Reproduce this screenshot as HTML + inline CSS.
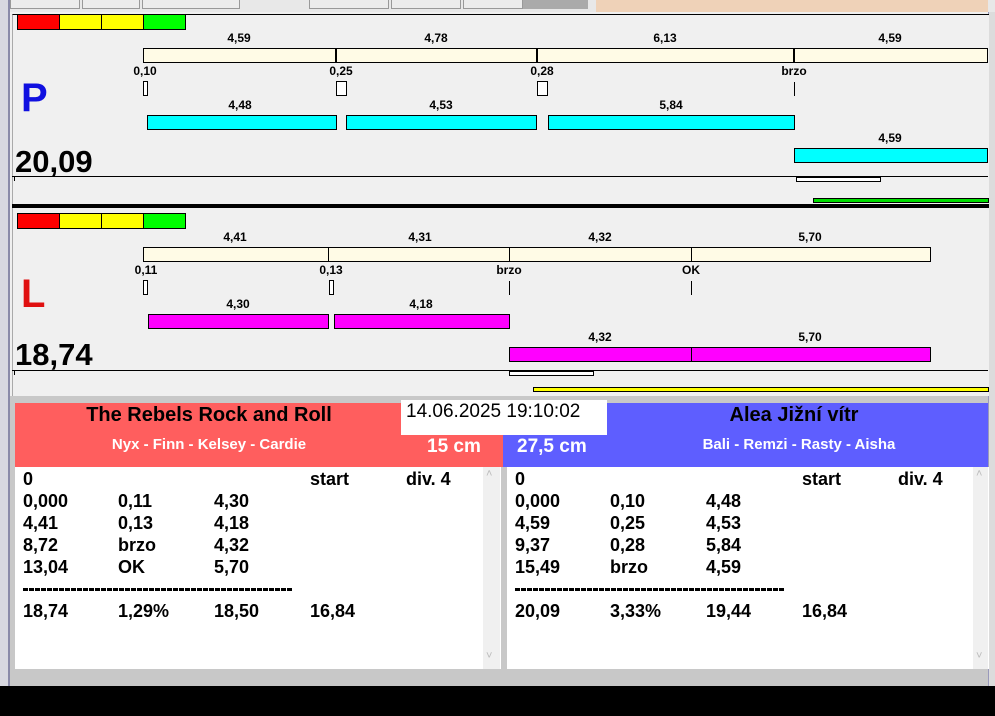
<!DOCTYPE html>
<html><head><meta charset="utf-8"><style>
*{margin:0;padding:0;box-sizing:border-box}
body{width:995px;height:716px;position:relative;overflow:hidden;background:#f0f0f0;font-family:"Liberation Sans",Arial,sans-serif}
.a{position:absolute}
.t{position:absolute;font-weight:bold;font-size:12px;color:#000;transform:translateX(-50%);white-space:nowrap}
.bx{position:absolute;border:1px solid #000}
.r{position:absolute;font-weight:bold;font-size:18px;white-space:nowrap}
.d{position:absolute;font-weight:bold;font-size:14px;white-space:nowrap;letter-spacing:-0.2px}
</style></head><body>
<div class="a" style="left:0;top:0;width:995px;height:12px;background:#e8e8e8"></div>
<div class="a" style="left:10px;top:0;width:70px;height:9px;border:1px solid #999;border-top:0;background:#ececec"></div>
<div class="a" style="left:82px;top:0;width:58px;height:9px;border:1px solid #999;border-top:0;background:#ececec"></div>
<div class="a" style="left:142px;top:0;width:98px;height:9px;border:1px solid #999;border-top:0;background:#ececec"></div>
<div class="a" style="left:309px;top:0;width:80px;height:9px;border:1px solid #999;border-top:0;background:#ececec"></div>
<div class="a" style="left:391px;top:0;width:70px;height:9px;border:1px solid #999;border-top:0;background:#ececec"></div>
<div class="a" style="left:463px;top:0;width:60px;height:9px;border:1px solid #999;border-top:0;background:#ececec"></div>
<div class="a" style="left:523px;top:0;width:65px;height:9px;background:#aaa"></div>
<div class="a" style="left:596px;top:0;width:392px;height:12px;background:#efd2b8"></div>
<div class="a" style="left:0;top:0;width:8px;height:690px;background:#d8d8e0"></div>
<div class="a" style="left:8px;top:0;width:2px;height:690px;background:#8a8aa8"></div>
<div class="a" style="left:988px;top:12px;width:7px;height:680px;background:#dcdcdc;border-left:1px solid #99b"></div>
<div class="a" style="left:12px;top:14px;width:977px;height:382px;border-top:1px solid #000;border-left:1px solid #aaa;background:#f0f0f0"></div>

<div class="bx" style="left:17px;top:14px;width:43px;height:16px;background:#f00"></div>
<div class="bx" style="left:59px;top:14px;width:43px;height:16px;background:#ff0"></div>
<div class="bx" style="left:101px;top:14px;width:43px;height:16px;background:#ff0"></div>
<div class="bx" style="left:143px;top:14px;width:43px;height:16px;background:#0f0"></div>

<div class="bx" style="left:143px;top:48px;width:845px;height:15px;background:#fffbe6"></div>
<div class="a" style="left:335px;top:48px;width:2px;height:15px;background:#000"></div>
<div class="a" style="left:536px;top:48px;width:2px;height:15px;background:#000"></div>
<div class="a" style="left:793px;top:48px;width:2px;height:15px;background:#000"></div>
<div class="t" style="left:239px;top:31px">4,59</div>
<div class="t" style="left:436px;top:31px">4,78</div>
<div class="t" style="left:665px;top:31px">6,13</div>
<div class="t" style="left:890px;top:31px">4,59</div>
<div class="t" style="left:145px;top:64px">0,10</div>
<div class="t" style="left:341px;top:64px">0,25</div>
<div class="t" style="left:542px;top:64px">0,28</div>
<div class="t" style="left:794px;top:64px">brzo</div>
<div class="bx" style="left:143px;top:81px;width:5px;height:15px;background:#fff"></div>
<div class="bx" style="left:336px;top:81px;width:11px;height:15px;background:#fff"></div>
<div class="bx" style="left:537px;top:81px;width:11px;height:15px;background:#fff"></div>
<div class="a" style="left:794px;top:82px;width:1px;height:14px;background:#000"></div>
<div class="t" style="left:240px;top:98px">4,48</div>
<div class="t" style="left:441px;top:98px">4,53</div>
<div class="t" style="left:671px;top:98px">5,84</div>
<div class="bx" style="left:147px;top:115px;width:190px;height:15px;background:#0ff"></div>
<div class="bx" style="left:346px;top:115px;width:191px;height:15px;background:#0ff"></div>
<div class="bx" style="left:548px;top:115px;width:247px;height:15px;background:#0ff"></div>
<div class="t" style="left:890px;top:131px">4,59</div>
<div class="bx" style="left:794px;top:148px;width:194px;height:15px;background:#0ff"></div>
<div class="a" style="left:21px;top:76px;font-size:40px;font-weight:bold;color:#1010e0">P</div>
<div class="a" style="left:15px;top:144px;font-size:31px;font-weight:bold">20,09</div>
<div class="a" style="left:12px;top:176px;width:976px;height:1px;background:#000"></div>
<div class="a" style="left:14px;top:176px;width:1px;height:5px;background:#000"></div>
<div class="bx" style="left:796px;top:177px;width:85px;height:5px;background:#fff"></div>
<div class="bx" style="left:813px;top:198px;width:176px;height:5px;background:#0d0"></div>
<div class="a" style="left:12px;top:204px;width:977px;height:4px;background:#000"></div>

<div class="bx" style="left:17px;top:213px;width:43px;height:16px;background:#f00"></div>
<div class="bx" style="left:59px;top:213px;width:43px;height:16px;background:#ff0"></div>
<div class="bx" style="left:101px;top:213px;width:43px;height:16px;background:#ff0"></div>
<div class="bx" style="left:143px;top:213px;width:43px;height:16px;background:#0f0"></div>
<div class="bx" style="left:143px;top:247px;width:788px;height:15px;background:#fffbe6"></div>
<div class="a" style="left:328px;top:247px;width:1px;height:15px;background:#000"></div>
<div class="a" style="left:509px;top:247px;width:1px;height:15px;background:#000"></div>
<div class="a" style="left:691px;top:247px;width:1px;height:15px;background:#000"></div>
<div class="t" style="left:235px;top:230px">4,41</div>
<div class="t" style="left:420px;top:230px">4,31</div>
<div class="t" style="left:600px;top:230px">4,32</div>
<div class="t" style="left:810px;top:230px">5,70</div>
<div class="t" style="left:146px;top:263px">0,11</div>
<div class="t" style="left:331px;top:263px">0,13</div>
<div class="t" style="left:509px;top:263px">brzo</div>
<div class="t" style="left:691px;top:263px">OK</div>
<div class="bx" style="left:143px;top:280px;width:5px;height:15px;background:#fff"></div>
<div class="bx" style="left:329px;top:280px;width:5px;height:15px;background:#fff"></div>
<div class="a" style="left:509px;top:281px;width:1px;height:14px;background:#000"></div>
<div class="a" style="left:691px;top:281px;width:1px;height:14px;background:#000"></div>
<div class="t" style="left:238px;top:297px">4,30</div>
<div class="t" style="left:421px;top:297px">4,18</div>
<div class="bx" style="left:148px;top:314px;width:181px;height:15px;background:#f0f"></div>
<div class="bx" style="left:334px;top:314px;width:176px;height:15px;background:#f0f"></div>
<div class="t" style="left:600px;top:330px">4,32</div>
<div class="t" style="left:810px;top:330px">5,70</div>
<div class="bx" style="left:509px;top:347px;width:422px;height:15px;background:#f0f"></div>
<div class="a" style="left:691px;top:347px;width:1px;height:15px;background:#000"></div>
<div class="a" style="left:21px;top:272px;font-size:40px;font-weight:bold;color:#e01010">L</div>
<div class="a" style="left:15px;top:337px;font-size:31px;font-weight:bold">18,74</div>
<div class="a" style="left:12px;top:370px;width:976px;height:1px;background:#000"></div>
<div class="a" style="left:14px;top:370px;width:1px;height:5px;background:#000"></div>
<div class="bx" style="left:509px;top:371px;width:85px;height:5px;background:#fff"></div>
<div class="bx" style="left:533px;top:387px;width:456px;height:5px;background:#ff0"></div>

<div class="a" style="left:10px;top:396px;width:978px;height:290px;background:#c8c8c8"></div>
<div class="a" style="left:15px;top:403px;width:488px;height:64px;background:#ff5e5e"></div>
<div class="a" style="left:503px;top:403px;width:485px;height:64px;background:#5e5eff"></div>
<div class="a" style="left:15px;top:404px;width:388px;text-align:center;font-weight:bold;font-size:20px">The Rebels Rock and Roll</div>
<div class="a" style="left:15px;top:436px;width:388px;text-align:center;font-weight:bold;font-size:15px;color:#fff">Nyx - Finn - Kelsey - Cardie</div>
<div class="a" style="left:401px;top:400px;width:206px;height:35px;background:#fff;font-size:19px;padding:1px 0 0 5px">14.06.2025 19:10:02</div>
<div class="a" style="left:427px;top:436px;font-weight:bold;font-size:19px;color:#fff">15 cm</div>
<div class="a" style="left:517px;top:436px;font-weight:bold;font-size:19px;color:#fff">27,5 cm</div>
<div class="a" style="left:606px;top:404px;width:376px;text-align:center;font-weight:bold;font-size:20px">Alea Jižní vítr</div>
<div class="a" style="left:606px;top:436px;width:386px;text-align:center;font-weight:bold;font-size:15px;color:#fff">Bali - Remzi - Rasty - Aisha</div>

<div class="a" style="left:15px;top:467px;width:486px;height:202px;background:#fff"></div>
<div class="a" style="left:483px;top:467px;width:17px;height:202px;background:#f0f0f0"></div>
<div class="a" style="left:507px;top:467px;width:482px;height:202px;background:#fff"></div>
<div class="a" style="left:973px;top:467px;width:15px;height:202px;background:#f0f0f0"></div>
<div class="a" style="left:486px;top:468px;font-size:11px;color:#bbb">˄</div>
<div class="a" style="left:486px;top:650px;font-size:11px;color:#bbb">˅</div>
<div class="a" style="left:976px;top:468px;font-size:11px;color:#bbb">˄</div>
<div class="a" style="left:976px;top:650px;font-size:11px;color:#bbb">˅</div>

<div class="r" style="left:23px;top:469px">0</div><div class="r" style="left:310px;top:469px">start</div><div class="r" style="left:406px;top:469px">div. 4</div>
<div class="r" style="left:23px;top:491px">0,000</div><div class="r" style="left:118px;top:491px">0,11</div><div class="r" style="left:214px;top:491px">4,30</div>
<div class="r" style="left:23px;top:513px">4,41</div><div class="r" style="left:118px;top:513px">0,13</div><div class="r" style="left:214px;top:513px">4,18</div>
<div class="r" style="left:23px;top:535px">8,72</div><div class="r" style="left:118px;top:535px">brzo</div><div class="r" style="left:214px;top:535px">4,32</div>
<div class="r" style="left:23px;top:557px">13,04</div><div class="r" style="left:118px;top:557px">OK</div><div class="r" style="left:214px;top:557px">5,70</div>
<div class="a" style="left:23px;top:588px;width:269px;height:3px;background:repeating-linear-gradient(90deg,#000 0 5px,transparent 5px 6px)"></div>
<div class="r" style="left:23px;top:601px">18,74</div><div class="r" style="left:118px;top:601px">1,29%</div><div class="r" style="left:214px;top:601px">18,50</div><div class="r" style="left:310px;top:601px">16,84</div>

<div class="r" style="left:515px;top:469px">0</div><div class="r" style="left:802px;top:469px">start</div><div class="r" style="left:898px;top:469px">div. 4</div>
<div class="r" style="left:515px;top:491px">0,000</div><div class="r" style="left:610px;top:491px">0,10</div><div class="r" style="left:706px;top:491px">4,48</div>
<div class="r" style="left:515px;top:513px">4,59</div><div class="r" style="left:610px;top:513px">0,25</div><div class="r" style="left:706px;top:513px">4,53</div>
<div class="r" style="left:515px;top:535px">9,37</div><div class="r" style="left:610px;top:535px">0,28</div><div class="r" style="left:706px;top:535px">5,84</div>
<div class="r" style="left:515px;top:557px">15,49</div><div class="r" style="left:610px;top:557px">brzo</div><div class="r" style="left:706px;top:557px">4,59</div>
<div class="a" style="left:515px;top:588px;width:269px;height:3px;background:repeating-linear-gradient(90deg,#000 0 5px,transparent 5px 6px)"></div>
<div class="r" style="left:515px;top:601px">20,09</div><div class="r" style="left:610px;top:601px">3,33%</div><div class="r" style="left:706px;top:601px">19,44</div><div class="r" style="left:802px;top:601px">16,84</div>

<div class="a" style="left:0;top:686px;width:995px;height:30px;background:#000"></div>
</body></html>
